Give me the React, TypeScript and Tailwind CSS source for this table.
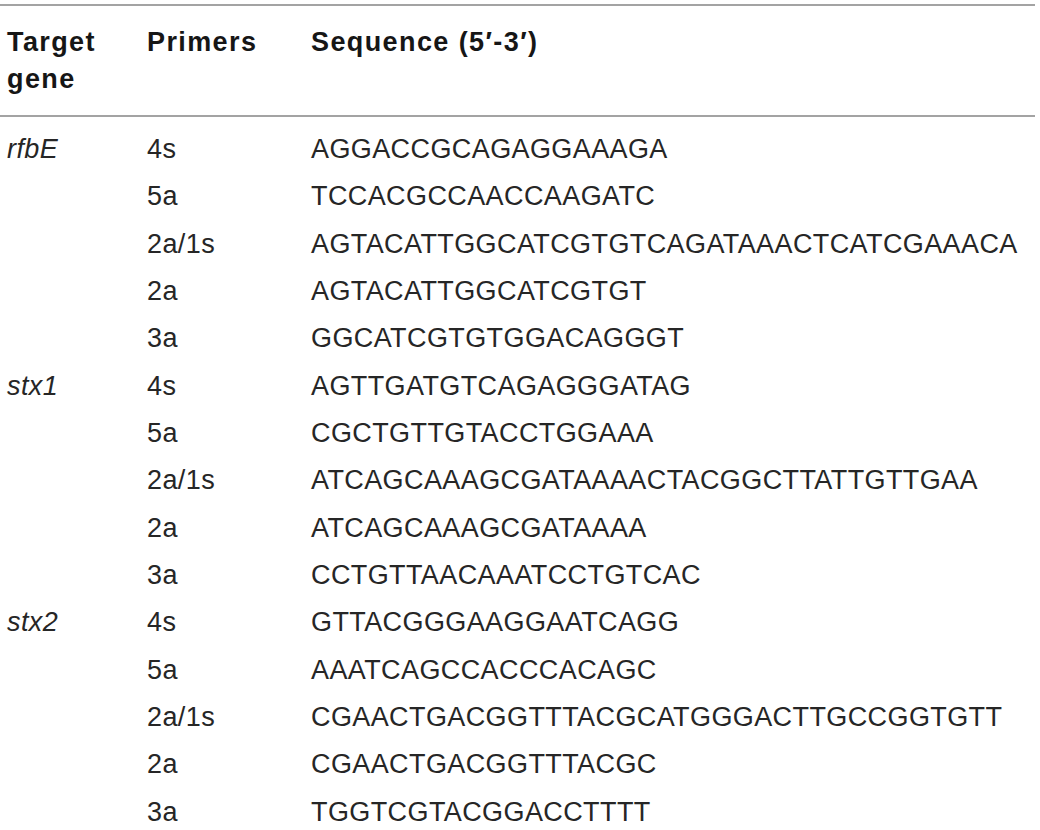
const rows = [
  { gene: "rfbE", primer: "4s", seq: "AGGACCGCAGAGGAAAGA" },
  { gene: "", primer: "5a", seq: "TCCACGCCAACCAAGATC" },
  { gene: "", primer: "2a/1s", seq: "AGTACATTGGCATCGTGTCAGATAAACTCATCGAAACA" },
  { gene: "", primer: "2a", seq: "AGTACATTGGCATCGTGT" },
  { gene: "", primer: "3a", seq: "GGCATCGTGTGGACAGGGT" },
  { gene: "stx1", primer: "4s", seq: "AGTTGATGTCAGAGGGATAG" },
  { gene: "", primer: "5a", seq: "CGCTGTTGTACCTGGAAA" },
  { gene: "", primer: "2a/1s", seq: "ATCAGCAAAGCGATAAAACTACGGCTTATTGTTGAA" },
  { gene: "", primer: "2a", seq: "ATCAGCAAAGCGATAAAA" },
  { gene: "", primer: "3a", seq: "CCTGTTAACAAATCCTGTCAC" },
  { gene: "stx2", primer: "4s", seq: "GTTACGGGAAGGAATCAGG" },
  { gene: "", primer: "5a", seq: "AAATCAGCCACCCACAGC" },
  { gene: "", primer: "2a/1s", seq: "CGAACTGACGGTTTACGCATGGGACTTGCCGGTGTT" },
  { gene: "", primer: "2a", seq: "CGAACTGACGGTTTACGC" },
  { gene: "", primer: "3a", seq: "TGGTCGTACGGACCTTTT" },
];

const App = () => {
  return (
    <div className="bg-white w-[1040px] h-[830px] overflow-hidden pt-[4px] font-['Liberation_Sans',Arial,sans-serif] text-[27px]">
      <div className="w-[1035px] border-t-2 border-[#a3a3a3]">
        {/* header */}
        <div className="grid grid-cols-[140px_164px_1fr] pl-[7px] pt-[18px] pb-[17px] border-b-2 border-[#a3a3a3] font-bold text-[#161616] leading-[37px] tracking-[1.4px]">
          <div>
            Target
            <br />
            gene
          </div>
          <div>Primers</div>
          <div>Sequence (5′-3′)</div>
        </div>

        {/* body */}
        <div className="pt-[9px] text-[#262626] leading-[47.35px] tracking-[0.4px]">
          {rows.map((r, i) => (
            <div key={i} className="grid grid-cols-[140px_164px_1fr] pl-[7px] whitespace-nowrap">
              <div className="italic">{r.gene}</div>
              <div>{r.primer}</div>
              <div>{r.seq}</div>
            </div>
          ))}
        </div>
      </div>
    </div>
  );
};

export default App;
